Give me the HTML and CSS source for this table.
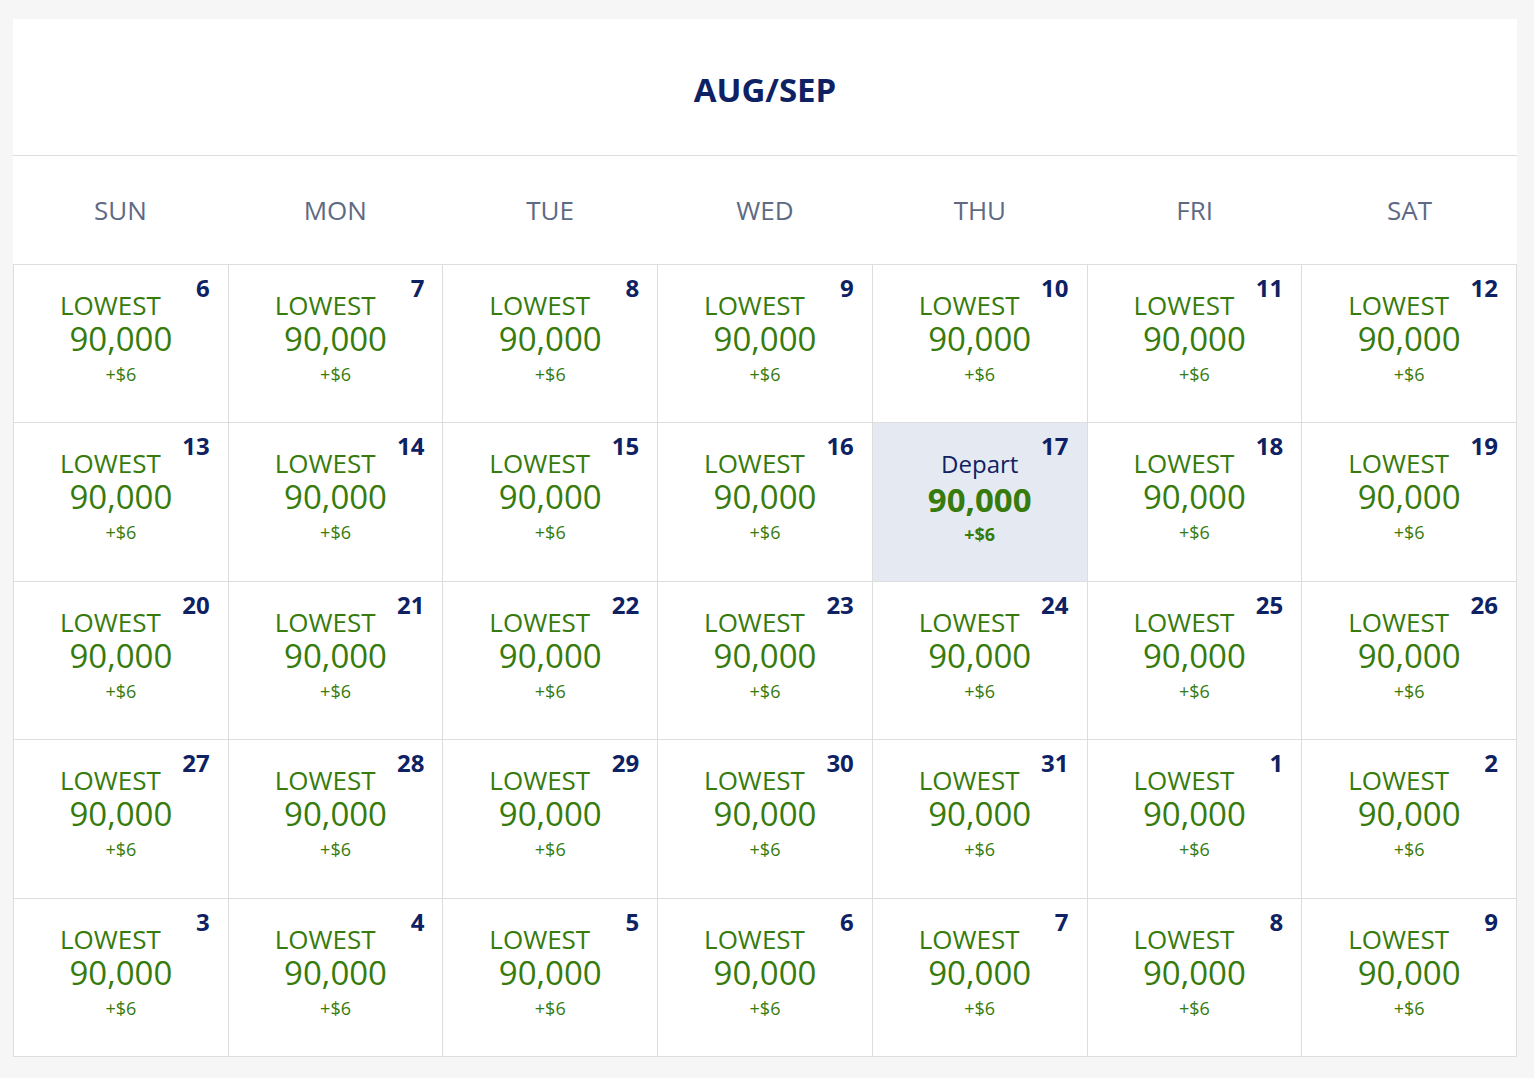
FILE: index.html
```html
<!DOCTYPE html>
<html>
<head>
<meta charset="utf-8">
<link rel="stylesheet" href="styles.css">
</head>
<body>
<div class="card">
  <div class="title">AUG/SEP</div>
  <div class="weekdays">
    <div>SUN</div><div>MON</div><div>TUE</div><div>WED</div><div>THU</div><div>FRI</div><div>SAT</div>
  </div>
  <div class="grid">
    <div class="cell"><span class="date">6</span><div class="label">LOWEST</div><div class="miles">90,000</div><div class="fee">+$6</div></div>
    <div class="cell"><span class="date">7</span><div class="label">LOWEST</div><div class="miles">90,000</div><div class="fee">+$6</div></div>
    <div class="cell"><span class="date">8</span><div class="label">LOWEST</div><div class="miles">90,000</div><div class="fee">+$6</div></div>
    <div class="cell"><span class="date">9</span><div class="label">LOWEST</div><div class="miles">90,000</div><div class="fee">+$6</div></div>
    <div class="cell"><span class="date">10</span><div class="label">LOWEST</div><div class="miles">90,000</div><div class="fee">+$6</div></div>
    <div class="cell"><span class="date">11</span><div class="label">LOWEST</div><div class="miles">90,000</div><div class="fee">+$6</div></div>
    <div class="cell"><span class="date">12</span><div class="label">LOWEST</div><div class="miles">90,000</div><div class="fee">+$6</div></div>

    <div class="cell"><span class="date">13</span><div class="label">LOWEST</div><div class="miles">90,000</div><div class="fee">+$6</div></div>
    <div class="cell"><span class="date">14</span><div class="label">LOWEST</div><div class="miles">90,000</div><div class="fee">+$6</div></div>
    <div class="cell"><span class="date">15</span><div class="label">LOWEST</div><div class="miles">90,000</div><div class="fee">+$6</div></div>
    <div class="cell"><span class="date">16</span><div class="label">LOWEST</div><div class="miles">90,000</div><div class="fee">+$6</div></div>
    <div class="cell selected"><span class="date">17</span><div class="depart">Depart</div><div class="miles bold">90,000</div><div class="fee bold">+$6</div></div>
    <div class="cell"><span class="date">18</span><div class="label">LOWEST</div><div class="miles">90,000</div><div class="fee">+$6</div></div>
    <div class="cell"><span class="date">19</span><div class="label">LOWEST</div><div class="miles">90,000</div><div class="fee">+$6</div></div>

    <div class="cell"><span class="date">20</span><div class="label">LOWEST</div><div class="miles">90,000</div><div class="fee">+$6</div></div>
    <div class="cell"><span class="date">21</span><div class="label">LOWEST</div><div class="miles">90,000</div><div class="fee">+$6</div></div>
    <div class="cell"><span class="date">22</span><div class="label">LOWEST</div><div class="miles">90,000</div><div class="fee">+$6</div></div>
    <div class="cell"><span class="date">23</span><div class="label">LOWEST</div><div class="miles">90,000</div><div class="fee">+$6</div></div>
    <div class="cell"><span class="date">24</span><div class="label">LOWEST</div><div class="miles">90,000</div><div class="fee">+$6</div></div>
    <div class="cell"><span class="date">25</span><div class="label">LOWEST</div><div class="miles">90,000</div><div class="fee">+$6</div></div>
    <div class="cell"><span class="date">26</span><div class="label">LOWEST</div><div class="miles">90,000</div><div class="fee">+$6</div></div>

    <div class="cell"><span class="date">27</span><div class="label">LOWEST</div><div class="miles">90,000</div><div class="fee">+$6</div></div>
    <div class="cell"><span class="date">28</span><div class="label">LOWEST</div><div class="miles">90,000</div><div class="fee">+$6</div></div>
    <div class="cell"><span class="date">29</span><div class="label">LOWEST</div><div class="miles">90,000</div><div class="fee">+$6</div></div>
    <div class="cell"><span class="date">30</span><div class="label">LOWEST</div><div class="miles">90,000</div><div class="fee">+$6</div></div>
    <div class="cell"><span class="date">31</span><div class="label">LOWEST</div><div class="miles">90,000</div><div class="fee">+$6</div></div>
    <div class="cell"><span class="date">1</span><div class="label">LOWEST</div><div class="miles">90,000</div><div class="fee">+$6</div></div>
    <div class="cell"><span class="date">2</span><div class="label">LOWEST</div><div class="miles">90,000</div><div class="fee">+$6</div></div>

    <div class="cell"><span class="date">3</span><div class="label">LOWEST</div><div class="miles">90,000</div><div class="fee">+$6</div></div>
    <div class="cell"><span class="date">4</span><div class="label">LOWEST</div><div class="miles">90,000</div><div class="fee">+$6</div></div>
    <div class="cell"><span class="date">5</span><div class="label">LOWEST</div><div class="miles">90,000</div><div class="fee">+$6</div></div>
    <div class="cell"><span class="date">6</span><div class="label">LOWEST</div><div class="miles">90,000</div><div class="fee">+$6</div></div>
    <div class="cell"><span class="date">7</span><div class="label">LOWEST</div><div class="miles">90,000</div><div class="fee">+$6</div></div>
    <div class="cell"><span class="date">8</span><div class="label">LOWEST</div><div class="miles">90,000</div><div class="fee">+$6</div></div>
    <div class="cell"><span class="date">9</span><div class="label">LOWEST</div><div class="miles">90,000</div><div class="fee">+$6</div></div>
  </div>
</div>
</body>
</html>
```

FILE: styles.css
```css
html, body {
  margin: 0;
  padding: 0;
  background: #f6f6f6;
}

body {
  font-family: "Open Sans", "Liberation Sans", sans-serif;
  padding: 19px 0 0 13px;
}

.card {
  width: 1504px;
  background: #ffffff;
}

.title {
  height: 137px;
  box-sizing: border-box;
  padding-top: 4px;
  border-bottom: 1px solid #dddddd;
  display: flex;
  align-items: center;
  justify-content: center;
  font-size: 33px;
  font-weight: 700;
  color: #0e2263;
}

.weekdays {
  display: grid;
  grid-template-columns: repeat(7, 1fr);
  height: 108px;
  align-items: center;
  text-align: center;
  font-size: 26px;
  color: #5e6a83;
}

.grid {
  display: grid;
  grid-template-columns: repeat(7, 1fr);
  grid-auto-rows: 157.4px;
  gap: 1px;
  background: #dddddd;
  border: 1px solid #dddddd;
}

.cell {
  position: relative;
  background: #ffffff;
  text-align: center;
  color: #367b0c;
  padding-top: 25px;
  box-sizing: border-box;
}

.cell.selected {
  background: #e5e9f2;
}

.date {
  position: absolute;
  top: 11px;
  right: 18px;
  font-size: 24px;
  line-height: 24px;
  font-weight: 700;
  color: #0e2263;
}

.label {
  font-size: 26px;
  line-height: 30px;
  padding-right: 21px;
}

.depart {
  font-size: 24px;
  line-height: 30px;
  color: #0e2263;
  padding-top: 1px;
  margin-bottom: -1px;
}

.miles {
  font-size: 33px;
  line-height: 34px;
  margin-top: 2px;
}

.miles.bold {
  font-weight: 700;
  margin-top: 5px;
}

.fee {
  font-size: 18px;
  line-height: 20px;
  margin-top: 8px;
}

.fee.bold {
  font-weight: 700;
  margin-top: 7px;
}
```
